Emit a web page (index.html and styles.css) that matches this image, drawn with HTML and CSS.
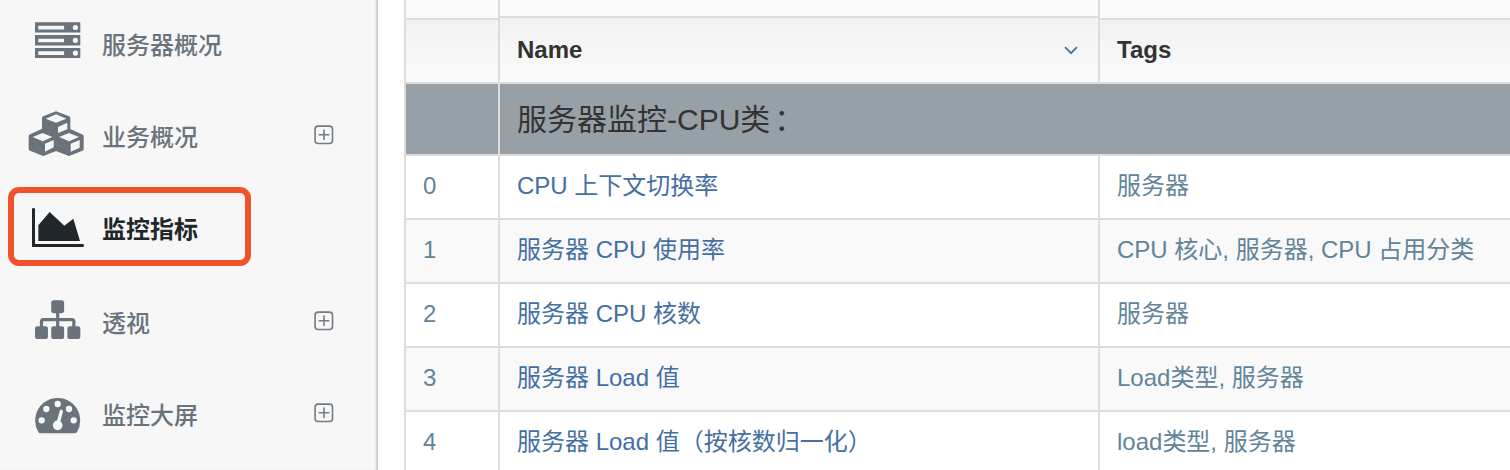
FILE: index.html
```html
<!DOCTYPE html>
<html lang="zh-CN">
<head>
<meta charset="utf-8">
<title>监控指标</title>
<link rel="stylesheet" href="styles.css">
</head>
<body>
<div class="app">
  <nav class="sidebar">
    <a class="item">
      <svg class="icon" viewBox="0 0 56 48"><path fill-rule="evenodd" d="M7 4.3h45.3v10.2H7zM10.3 7.8v3.7h25.8V7.8zM7 17h45.3v10.4H7zM10.3 20.7v3.6h25.8v-3.6zM7 29.9h45.3v10.2H7zM10.3 33.3v3.6h25.8v-3.6z"/><g class="hole"><circle cx="47.4" cy="9.5" r="2.6"/><circle cx="47.4" cy="22.3" r="2.6"/><circle cx="47.4" cy="35.1" r="2.6"/></g></svg>
      <span class="label">服务器概况</span>
    </a>
    <a class="item">
      <svg class="icon" viewBox="84 330 168 144"><path class="round" d="M168 340l37 14v37l40 18v38l-38 15-39-15-38 15-38-15v-38l40-19v-36z"/><path class="hole" d="M168 343l31 13-31 12-31-12zM174 381l28-13v20l-28 11zM98 411l30-12 29 12-29 13zM135 431l26-11v22l-26 13zM177 411l30-12 30 12-30 13zM212 431l27-11v23l-27 12z"/></svg>
      <span class="label">业务概况</span>
      <svg class="plus" viewBox="0 0 20 20"><rect x="1.1" y="1.1" width="17.4" height="17.4" rx="3"/><path d="M4.7 9.8h10.6M10 4.5v10.6"/></svg>
    </a>
    <a class="item active">
      <svg class="icon" viewBox="84 96 168 144"><path d="M96 115h9v107h146v9H96zM115 166l34-40 44 41 27-21 20 67H115z"/></svg>
      <span class="label">监控指标</span>
    </a>
    <a class="item late">
      <svg class="icon" viewBox="84 48 168 144"><path transform="translate(105 51) scale(.0759)" d="M1792 1248v320q0 40-28 68t-68 28h-320q-40 0-68-28t-28-68v-320q0-40 28-68t68-28h96v-192h-512v192h96q40 0 68 28t28 68v320q0 40-28 68t-68 28h-320q-40 0-68-28t-28-68v-320q0-40 28-68t68-28h96v-192h-512v192h96q40 0 68 28t28 68v320q0 40-28 68t-68 28h-320q-40 0-68-28t-28-68v-320q0-40 28-68t68-28h96v-192q0-52 38-90t90-38h512v-192h-96q-40 0-68-28t-28-68v-320q0-40 28-68t68-28h320q40 0 68 28t28 68v320q0 40-28 68t-68 28h-96v192h512q52 0 90 38t38 90v192h96q40 0 68 28t28 68z"/></svg>
      <span class="label">透视</span>
      <svg class="plus" viewBox="0 0 20 20"><rect x="1.1" y="1.1" width="17.4" height="17.4" rx="3"/><path d="M4.7 9.8h10.6M10 4.5v10.6"/></svg>
    </a>
    <a class="item">
      <svg class="icon" viewBox="84 324 168 144"><path d="M121 460Q117 460 115 456A67.5 67.5 0 1 1 231 456Q229 460 225 460z"/><g class="hole"><circle cx="173" cy="372" r="9.5"/><circle cx="139" cy="387" r="9.5"/><circle cx="207" cy="387" r="9.5"/><circle cx="125" cy="421" r="9.5"/><circle cx="221" cy="421" r="9.5"/><circle cx="173" cy="436" r="14.5"/><path d="M169 430l10-37q2-5 6-4t4 6l-10 37z"/></g></svg>
      <span class="label">监控大屏</span>
      <svg class="plus" viewBox="0 0 20 20"><rect x="1.1" y="1.1" width="17.4" height="17.4" rx="3"/><path d="M4.7 9.8h10.6M10 4.5v10.6"/></svg>
    </a>
  </nav>
  <main class="grid">
    <div class="row filters"><div class="cell"></div><div class="cell raised"></div><div class="cell"></div></div>
    <div class="row head">
      <div class="cell"></div>
      <div class="cell raised"><span>Name</span><svg class="chevron" viewBox="0 0 14 9"><path d="M1 1.2l6 6 6-6"/></svg></div>
      <div class="cell">Tags</div>
    </div>
    <div class="row group"><div class="cell"></div><div class="cell title">服务器监控-CPU类<span class="colon">：</span></div></div>
    <div class="row"><div class="cell">0</div><div class="cell name">CPU 上下文切换率</div><div class="cell">服务器</div></div>
    <div class="row alt"><div class="cell">1</div><div class="cell name">服务器 CPU 使用率</div><div class="cell">CPU 核心, 服务器, CPU 占用分类</div></div>
    <div class="row"><div class="cell">2</div><div class="cell name">服务器 CPU 核数</div><div class="cell">服务器</div></div>
    <div class="row alt"><div class="cell">3</div><div class="cell name">服务器 Load 值</div><div class="cell">Load类型, 服务器</div></div>
    <div class="row"><div class="cell">4</div><div class="cell name">服务器 Load 值（按核数归一化）</div><div class="cell">load类型, 服务器</div></div>
  </main>
</div>
</body>
</html>
```
FILE: styles.css
```css
*, *::after { box-sizing: border-box; }
body {
  margin: 0;
  background: #fff;
  font: 24px/36px "Liberation Sans", "Noto Sans CJK SC", sans-serif;
  overflow: hidden;
}
.app { display: flex; height: 470px; overflow: hidden; }

.sidebar {
  flex: none;
  width: 378px;
  height: 470px;
  margin-right: 26px;
  background: #f7f7f7;
  border-right: 1px solid #c9c9c9;
  box-shadow: inset -2px 0 2px -1px #ccc;
  color: #6a737b;
  overflow: hidden;
}
.item {
  position: relative;
  display: flex;
  align-items: flex-start;
  height: 92px;
  padding: 18px 0 0 28px;
}
.late { margin-top: 2px; }
.icon { flex: none; width: 56px; height: 48px; fill: currentColor; }
.hole { fill: #f7f7f7; }
.round { stroke: currentColor; stroke-width: 12; stroke-linejoin: round; }
.label { margin: 10px 0 0 18px; font-weight: 500; }
.plus {
  width: 20px;
  height: 20px;
  margin: 14.5px 43px 0 auto;
  fill: none;
  stroke: #747b82;
  stroke-width: 1.6;
}
.active { color: #21262a; }
.active .label { font-weight: 700; }
.active::after {
  content: "";
  position: absolute;
  left: 8px;
  top: 3px;
  width: 243px;
  height: 79px;
  border: 6px solid #f0532b;
  border-radius: 11px;
}

.grid { flex: 1; min-width: 0; border-left: 2px solid #ddd; color: #618499; }
.row {
  display: grid;
  grid-template-columns: 94px 600px 1fr;
  height: 64px;
}
.cell {
  display: flex;
  align-items: center;
  padding: 0 17px 2px;
  border-right: 2px solid #ddd;
  border-bottom: 2px solid #ddd;
  white-space: nowrap;
  min-width: 0;
}
.cell:last-child { border-right: 0; }
.alt { background: #f9f9f9; }
.name { color: #446fa3; }
.filters { height: 20px; background: #fafafa; }
.filters .raised { height: 18px; }
.head { color: #333; font-weight: 700; }
.head .cell { background: linear-gradient(#f2f2f2, #fafafa); }
.head .raised { margin-top: -2px; justify-content: space-between; padding: 2px 20px 2px 17px; }
.chevron { width: 14px; height: 9px; fill: none; stroke: #446fa3; stroke-width: 1.7; }
.group { height: 72px; color: #333; grid-template-columns: 94px 1fr; }
.group .cell { background: #96a0a6; }
.group .title { font-size: 30px; padding: 2px 17px 0; }
.colon { margin-left: 4px; }
```
